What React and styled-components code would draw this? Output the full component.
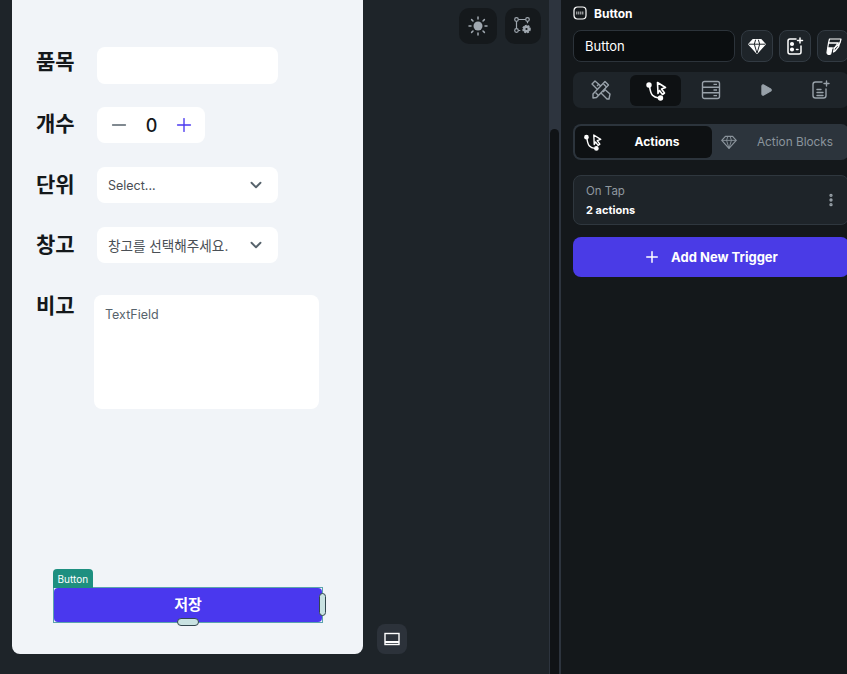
import React from 'react'
import styled, { createGlobalStyle } from 'styled-components'
import { ChevronDown, Minus, Plus, EllipsisVertical, Play } from 'lucide-react'

const GlobalStyle = createGlobalStyle`
    html, body { margin: 0; padding: 0; height: 100%; background: #1e2429; }
    #root { height: 100%; }
    * { box-sizing: border-box; }
    body { font-family: Inter, "Noto Sans CJK KR", sans-serif; overflow: hidden; }
`

const Page = styled.div`
    display: flex;
    width: 847px;
    height: 674px;
    overflow: hidden;
`

const Canvas = styled.div`
    display: flex;
    width: 549px;
    height: 674px;
    padding: 0 8px 20px 12px;
    background: #1e2429;
`

const Phone = styled.div`
    display: flex;
    flex-direction: column;
    width: 351px;
    height: 654px;
    padding: 47px 24px 32px 24px;
    background: #f1f4f8;
    border-radius: 0 0 8px 8px;
`

const FieldRow = styled.div`
    display: flex;
    align-items: center;
    height: ${p => p.$h}px;
    margin-bottom: ${p => p.$mb}px;
`

const Label = styled.div`
    width: 61px;
    color: #14181b;
    font-size: 21px;
    font-weight: 700;
    line-height: ${p => p.$lh || 28}px;
    flex-shrink: 0;
    padding-bottom: ${p => p.$pb || 0}px;
`

const TextInput = styled.div`
    width: 181px;
    height: 37px;
    background: #fff;
    border-radius: 8px;
`

const Stepper = styled.div`
    display: flex;
    align-items: center;
    width: 108px;
    height: 36px;
    padding: 0 10px 0 11px;
    background: #fff;
    border-radius: 8px;
    color: #14181b;
    font-size: 18px;
    font-weight: 500;
`

const Count = styled.span`
    flex: 1;
    text-align: center;
`

const Select = styled.div`
    display: flex;
    align-items: center;
    justify-content: space-between;
    width: 181px;
    height: 36px;
    padding: 0 13px 0 11px;
    background: #fff;
    border-radius: 8px;
    color: #4a4f55;
    font-size: ${p => p.$size || 12.5}px;
    svg { color: #57636c; }
`

const NoteWrap = styled.div`
    display: flex;
    align-items: flex-start;
`

const NoteArea = styled.div`
    width: 225px;
    height: 114px;
    margin-left: -3px;
    padding: 12px 11px;
    background: #fff;
    border-radius: 8px;
    color: #57636c;
    font-size: 12.5px;
    line-height: 16px;
`

const ButtonSlot = styled.div`
    position: relative;
    width: 270px;
    height: 36px;
    margin-top: auto;
    margin-bottom: -1px;
    margin-left: 17px;
    border: 1px solid #5ba3ad;
`

const SaveButton = styled.div`
    display: flex;
    align-items: center;
    justify-content: center;
    height: 100%;
    padding-bottom: 3px;
    background: #4a38ee;
    border-radius: 4px;
    color: #fff;
    font-size: 15px;
    font-weight: 700;
`

const SelectTag = styled.div`
    position: absolute;
    left: -1px;
    top: -19px;
    height: 19px;
    padding: 0 4.500px;
    background: #1e8f80;
    border-radius: 4px 4px 0 0;
    color: #fff;
    font-size: 10px;
    line-height: 20px;
`

const Handle = styled.div`
    position: absolute;
    background: #c9e2e2;
    border: 1px solid #33474f;
    border-radius: 4px;
    ${p => p.$side ? `
        right: -4px; top: 5px; width: 7px; height: 23px;
    ` : `
        left: 123px; bottom: -4px; width: 22px; height: 8px;
    `}
`

const SideColumn = styled.div`
    flex: 1;
    display: flex;
    flex-direction: column;
    justify-content: space-between;
    padding-top: 8px;
`

const TopTools = styled.div`
    display: flex;
    justify-content: flex-end;
    gap: 8px;
`

const ToolButton = styled.div`
    display: flex;
    align-items: center;
    justify-content: center;
    width: ${p => p.$w || 36}px;
    height: 36px;
    background: #15191c;
    border-radius: 10px;
    color: #a0a8b0;
`

const ViewButton = styled.div`
    display: flex;
    align-items: center;
    justify-content: center;
    width: 30px;
    height: 30px;
    margin-left: 14px;
    background: #2c323a;
    border-radius: 8px;
    color: #fff;
`

const ScrollTrack = styled.div`
    display: flex;
    flex-direction: column;
    justify-content: flex-end;
    width: 12px;
    height: 674px;
    background: #2d343e;
    padding: 0 1px;
    border-right: 1px solid #2d343e;
`

const ScrollThumb = styled.div`
    height: 545px;
    background: #101316;
    border-radius: 6px 6px 0 0;
`

const Panel = styled.div`
    width: 286px;
    height: 674px;
    overflow: hidden;
    padding: 5px 0 0 12px;
    background: #14181b;
    color: #fff;
`

const PanelInner = styled.div`
    width: 276px;
`

const PanelTitle = styled.div`
    display: flex;
    align-items: center;
    gap: 7px;
    height: 16px;
    font-size: 12px;
    font-weight: 700;
`

const NameRow = styled.div`
    display: flex;
    gap: 6px;
    margin-top: 9px;
`

const NameInput = styled.div`
    display: flex;
    align-items: center;
    width: 162px;
    height: 32px;
    padding-left: 11px;
    background: #0b0e10;
    border: 1px solid #2c333a;
    border-radius: 8px;
    font-size: 13px;
`

const SquareButton = styled.div`
    display: flex;
    align-items: center;
    justify-content: center;
    width: 32px;
    height: 32px;
    background: #1e2429;
    border: 1px solid #323a42;
    border-radius: 8px;
    color: #fff;
`

const TabStrip = styled.div`
    display: grid;
    grid-template-columns: repeat(5, 1fr);
    align-items: center;
    height: 36px;
    margin-top: 10px;
    background: #1e2429;
    border-radius: 8px;
    color: #98a1a9;
`

const TabCell = styled.div`
    display: flex;
    align-items: center;
    justify-content: center;
    height: 31px;
    width: 51px;
    justify-self: center;
    border-radius: 6px;
    background: ${p => p.$active ? '#0e1113' : 'transparent'};
    color: ${p => p.$active ? '#fff' : 'inherit'};
`

const Segment = styled.div`
    display: flex;
    height: 36px;
    margin-top: 16px;
    padding: 2px;
    background: #2c343c;
    border-radius: 8px;
    font-size: 12px;
`

const SegmentItem = styled.div`
    display: flex;
    align-items: center;
    width: ${p => p.$active ? 137 : 135}px;
    padding-left: ${p => p.$active ? 8 : 9}px;
    padding-bottom: 1px;
    border-radius: 6px;
    background: ${p => p.$active ? '#0e1113' : 'transparent'};
    color: ${p => p.$active ? '#fff' : '#8b949c'};
    font-weight: ${p => p.$active ? 700 : 400};
`

const SegmentText = styled.span`
    flex: 1;
    text-align: center;
    padding-left: ${p => p.$shift || 0}px;
    font-size: ${p => p.$size || 12}px;
`

const TriggerCard = styled.div`
    display: flex;
    align-items: center;
    justify-content: space-between;
    height: 50px;
    margin-top: 15px;
    padding: 0 9px 0 12px;
    background: #1e2429;
    border: 1px solid #2f373e;
    border-radius: 8px;
    svg { color: #9aa3aa; }
`

const TriggerTitle = styled.div`
    color: #8f989f;
    font-size: 11.500px;
    line-height: 16px;
`

const TriggerSub = styled.div`
    margin-top: 3px;
    color: #fff;
    font-size: 11px;
    font-weight: 700;
    line-height: 16px;
`

const AddTrigger = styled.div`
    display: flex;
    align-items: center;
    justify-content: center;
    gap: 10px;
    height: 40px;
    margin-top: 12px;
    padding-right: 1px;
    background: #4a3be6;
    border-radius: 8px;
    font-size: 13px;
    font-weight: 700;
`

function FlowIcon({ size = 22 }) {
    return (
        <svg width={size} height={size} viewBox="0 0 22 22" fill="none" stroke="currentColor" strokeWidth="1.600" strokeLinecap="round" strokeLinejoin="round">
            <circle cx="4" cy="6" r="1.900" fill="currentColor" />
            <circle cx="15.500" cy="19" r="1.900" fill="currentColor" />
            <path d="M4.500 7c.5 4 1 7 3 9.300S11 18.700 14 19" />
            <path d="M12.500 3.500l8 5-4 1.500 3 4-2 1.500-3-4-1.500 3z" />
        </svg>
    )
}

function GemIcon({ size = 18, filled }) {
    return (
        <svg width={size} height={size} viewBox="0 0 20 20" fill={filled ? 'currentColor' : 'none'} stroke="currentColor" strokeWidth="1.500" strokeLinejoin="round">
            <path d="M5.500 3h9L19 8l-9 10L1 8z" />
            <path d="M1 8h18M7 8l3 10 3-10M7 8l1.500-5M13 8l-1.500-5" stroke={filled ? '#1e2429' : 'currentColor'} strokeWidth="1.100" />
        </svg>
    )
}

function WidgetAddIcon() {
    return (
        <svg width="18" height="18" viewBox="0 0 18 18" fill="none" stroke="currentColor" strokeWidth="1.500" strokeLinecap="round">
            <path d="M10 2H4a2 2 0 0 0-2 2v11a2 2 0 0 0 2 2h9a2 2 0 0 0 2-2V9" />
            <circle cx="6" cy="7" r="1.300" fill="currentColor" />
            <circle cx="6" cy="12.500" r="1.300" fill="currentColor" />
            <path d="M10.500 12.500h1.500M14 1v5M11.500 3.500h5" />
        </svg>
    )
}

function FlagIcon() {
    return (
        <svg width="18" height="18" viewBox="0 0 18 18" fill="none" stroke="currentColor" strokeWidth="1.200" strokeLinejoin="round">
            <path d="M5.500 2H17l-1 4H4.500z" />
            <path d="M4.500 6h9.500l-3.500 5H3.700z" />
            <path d="M10.500 11l5-4.500-.8 3-3.700 4.500-1.500 1z" />
            <path d="M3.700 11h4.300l-1 4.500a2 2 0 0 1-4 0z" fill="currentColor" />
        </svg>
    )
}

function RulerPencilIcon() {
    return (
        <svg width="22" height="22" viewBox="0 0 22 22" fill="none" stroke="currentColor" strokeWidth="1.400" strokeLinejoin="round">
            <path d="M5 2l15 13-1 5-2 0L2 5z" />
            <path d="M7 7l2-2M10 10l2-2M13 13l2-2" />
            <path d="M3 15L15 2.500l3.500 3.500L6.500 18.500 3 19z" fill="#1e2429" />
            <path d="M5.500 13.500l3 3M13.500 5l3 3" />
        </svg>
    )
}

function TableIcon() {
    return (
        <svg width="20" height="20" viewBox="0 0 20 20" fill="none" stroke="currentColor" strokeWidth="1.400">
            <rect x="1.500" y="1.500" width="17" height="17" rx="2" />
            <path d="M1.500 7.200h17M1.500 12.800h17M12.500 4.400h3.500M12.500 10h3.500M12.500 15.600h3.500" />
        </svg>
    )
}

function NotePlusIcon() {
    return (
        <svg width="20" height="20" viewBox="0 0 20 20" fill="none" stroke="currentColor" strokeWidth="1.400" strokeLinecap="round">
            <path d="M11 2H4.500A2.500 2.500 0 0 0 2 4.500v11A2.500 2.500 0 0 0 4.500 18h8a2.500 2.500 0 0 0 2.500-2.500V9" />
            <path d="M6 9.500h4M6 12.500h6M6 15.500h6M15.500 1v5M13 3.500h5" />
        </svg>
    )
}

function SunIcon() {
    return (
        <svg width="20" height="20" viewBox="0 0 20 20" fill="currentColor" stroke="currentColor" strokeWidth="1.500" strokeLinecap="round">
            <circle cx="10" cy="10" r="4.500" stroke="none" />
            <path d="M10 1v2M10 17v2M1 10h2M17 10h2M3.600 3.600l1.400 1.400M15 15l1.400 1.400M3.600 16.400L5 15M15 5l1.400-1.400" />
        </svg>
    )
}

function NodesGearIcon() {
    return (
        <svg width="20" height="20" viewBox="0 0 20 20" fill="none" stroke="currentColor" strokeWidth="1.200">
            <circle cx="3.500" cy="3.500" r="1.800" />
            <circle cx="14.500" cy="3.500" r="1.800" />
            <circle cx="3.500" cy="14.500" r="1.800" />
            <path d="M5.300 3.500h7.400M3.500 5.300v7.400M5.300 14.500h2M14.500 5.300v2" />
            <circle cx="13.500" cy="13" r="3.400" fill="currentColor" stroke="currentColor" strokeWidth="1.800" strokeDasharray="1.800 1" />
            <circle cx="13.500" cy="13" r="1.100" fill="#15191c" stroke="none" />
        </svg>
    )
}

function BottomBarIcon() {
    return (
        <svg width="16" height="14" viewBox="0 0 16 14" fill="none" stroke="currentColor" strokeWidth="1.400">
            <rect x="1" y="1.500" width="14" height="11" />
            <path d="M1 10h14" strokeWidth="2" />
        </svg>
    )
}

function BtnBadge() {
    return (
        <svg width="14" height="14" viewBox="0 0 14 14" fill="none" stroke="currentColor">
            <rect x="1" y="1" width="12" height="12" rx="3.500" strokeWidth="1.200" />
            <path d="M3.800 5.500v3M5.800 5.500v3M7.800 5.500v3M9.800 5.500v3" strokeWidth="0.800" />
        </svg>
    )
}

export default function App() {
    return (
        <Page>
            <GlobalStyle />
            <Canvas>
                <Phone>
                    <FieldRow $h={37} $mb={23}>
                        <Label $pb={8}>품목</Label>
                        <TextInput />
                    </FieldRow>
                    <FieldRow $h={36} $mb={24}>
                        <Label $pb={2}>개수</Label>
                        <Stepper>
                            <Minus size={22} strokeWidth={1.500} color="#57636c" />
                            <Count>0</Count>
                            <Plus size={22} strokeWidth={1.500} color="#4b39ef" />
                        </Stepper>
                    </FieldRow>
                    <FieldRow $h={36} $mb={24}>
                        <Label>단위</Label>
                        <Select>
                            Select...
                            <ChevronDown size={18} strokeWidth={2.500} />
                        </Select>
                    </FieldRow>
                    <FieldRow $h={36} $mb={32}>
                        <Label>창고</Label>
                        <Select $size={13.600}>
                            창고를 선택해주세요.
                            <ChevronDown size={18} strokeWidth={2.500} />
                        </Select>
                    </FieldRow>
                    <NoteWrap>
                        <Label $lh={22}>비고</Label>
                        <NoteArea>TextField</NoteArea>
                    </NoteWrap>
                    <ButtonSlot>
                        <SelectTag>Button</SelectTag>
                        <SaveButton>저장</SaveButton>
                        <Handle $side />
                        <Handle />
                    </ButtonSlot>
                </Phone>
                <SideColumn>
                    <TopTools>
                        <ToolButton $w={38}><SunIcon /></ToolButton>
                        <ToolButton><NodesGearIcon /></ToolButton>
                    </TopTools>
                    <ViewButton><BottomBarIcon /></ViewButton>
                </SideColumn>
            </Canvas>
            <ScrollTrack>
                <ScrollThumb />
            </ScrollTrack>
            <Panel>
                <PanelInner>
                    <PanelTitle><BtnBadge />Button</PanelTitle>
                    <NameRow>
                        <NameInput>Button</NameInput>
                        <SquareButton><GemIcon filled /></SquareButton>
                        <SquareButton><WidgetAddIcon /></SquareButton>
                        <SquareButton><FlagIcon /></SquareButton>
                    </NameRow>
                    <TabStrip>
                        <TabCell><RulerPencilIcon /></TabCell>
                        <TabCell $active><FlowIcon /></TabCell>
                        <TabCell><TableIcon /></TabCell>
                        <TabCell><Play size={14} fill="currentColor" /></TabCell>
                        <TabCell><NotePlusIcon /></TabCell>
                    </TabStrip>
                    <Segment>
                        <SegmentItem $active>
                            <FlowIcon size={19} />
                            <SegmentText>Actions</SegmentText>
                        </SegmentItem>
                        <SegmentItem>
                            <GemIcon size={16} />
                            <SegmentText $shift={6} $size={11.800}>Action Blocks</SegmentText>
                        </SegmentItem>
                    </Segment>
                    <TriggerCard>
                        <div>
                            <TriggerTitle>On Tap</TriggerTitle>
                            <TriggerSub>2 actions</TriggerSub>
                        </div>
                        <EllipsisVertical size={16} strokeWidth={3} />
                    </TriggerCard>
                    <AddTrigger>
                        <Plus size={18} />
                        Add New Trigger
                    </AddTrigger>
                </PanelInner>
            </Panel>
        </Page>
    )
}
